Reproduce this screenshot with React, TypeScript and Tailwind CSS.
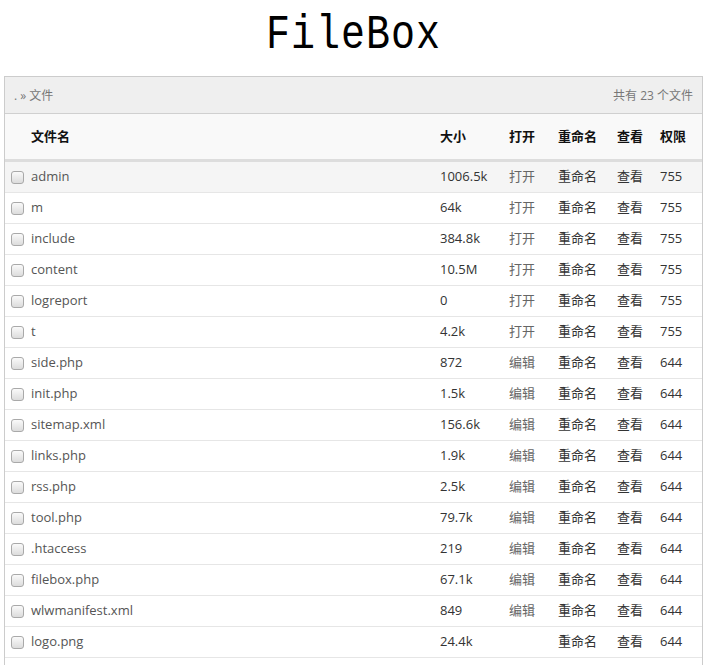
import React from 'react';

type FileRow = {
  name: string;
  size: string;
  open: string;
  perm: string;
};

const files: FileRow[] = [
  { name: 'admin', size: '1006.5k', open: '打开', perm: '755' },
  { name: 'm', size: '64k', open: '打开', perm: '755' },
  { name: 'include', size: '384.8k', open: '打开', perm: '755' },
  { name: 'content', size: '10.5M', open: '打开', perm: '755' },
  { name: 'logreport', size: '0', open: '打开', perm: '755' },
  { name: 't', size: '4.2k', open: '打开', perm: '755' },
  { name: 'side.php', size: '872', open: '编辑', perm: '644' },
  { name: 'init.php', size: '1.5k', open: '编辑', perm: '644' },
  { name: 'sitemap.xml', size: '156.6k', open: '编辑', perm: '644' },
  { name: 'links.php', size: '1.9k', open: '编辑', perm: '644' },
  { name: 'rss.php', size: '2.5k', open: '编辑', perm: '644' },
  { name: 'tool.php', size: '79.7k', open: '编辑', perm: '644' },
  { name: '.htaccess', size: '219', open: '编辑', perm: '644' },
  { name: 'filebox.php', size: '67.1k', open: '编辑', perm: '644' },
  { name: 'wlwmanifest.xml', size: '849', open: '编辑', perm: '644' },
  { name: 'logo.png', size: '24.4k', open: '', perm: '644' },
];

const cols = 'grid grid-cols-[430px_69px_49px_59px_43px_48px]';

function Checkbox() {
  return (
    <span className="inline-block w-[13px] h-[13px] rounded-[3px] border border-[#a9a9a9] bg-gradient-to-b from-[#fafafa] to-[#dcdcdc]" />
  );
}

export default function App() {
  return (
    <div className="min-h-screen bg-white font-['Open_Sans','Noto_Sans_CJK_SC',sans-serif] text-[13px]">
      <div className="h-[76px] flex items-center justify-center">
        <h1 className="font-['Liberation_Mono',monospace] text-[40px] tracking-[1px] scale-y-[1.2] text-black leading-none pb-[4px]">
          FileBox
        </h1>
      </div>

      <div className="mx-[4px] border border-[#cccccc] border-b-0">
        <div className="h-[37px] flex items-center justify-between px-[9px] bg-[#efefef] border-b border-[#d0d0d0] text-[12px] text-[#777]">
          <span className="pt-[2px]">. » 文件</span>
          <span className="pt-[2px]">共有 23 个文件</span>
        </div>

        <div className={`${cols} h-[48px] items-center bg-[#f9f9f9] border-b-[3px] border-[#dddddd] font-bold text-[#111]`}>
          <div className="pl-[26px]">文件名</div>
          <div className="pl-[5px]">大小</div>
          <div className="pl-[5px]">打开</div>
          <div className="pl-[5px]">重命名</div>
          <div className="pl-[5px]">查看</div>
          <div className="pl-[5px]">权限</div>
        </div>

        {files.map((f, i) => (
          <div
            key={f.name}
            className={`${cols} h-[31px] items-center border-b border-[#e6e6e6] ${i === 0 ? 'bg-[#f5f5f5]' : 'bg-white'}`}
          >
            <div className="flex items-center pl-[6px] gap-[7px] text-[#555]">
              <Checkbox />
              <span>{f.name}</span>
            </div>
            <div className="pl-[5px] text-[#333]">{f.size}</div>
            <div className="pl-[5px] text-[#666]">{f.open}</div>
            <div className="pl-[5px] text-[#333]">重命名</div>
            <div className="pl-[5px] text-[#333]">查看</div>
            <div className="pl-[5px] text-[#333]">{f.perm}</div>
          </div>
        ))}
        <div className="h-[31px]" />
      </div>
    </div>
  );
}
